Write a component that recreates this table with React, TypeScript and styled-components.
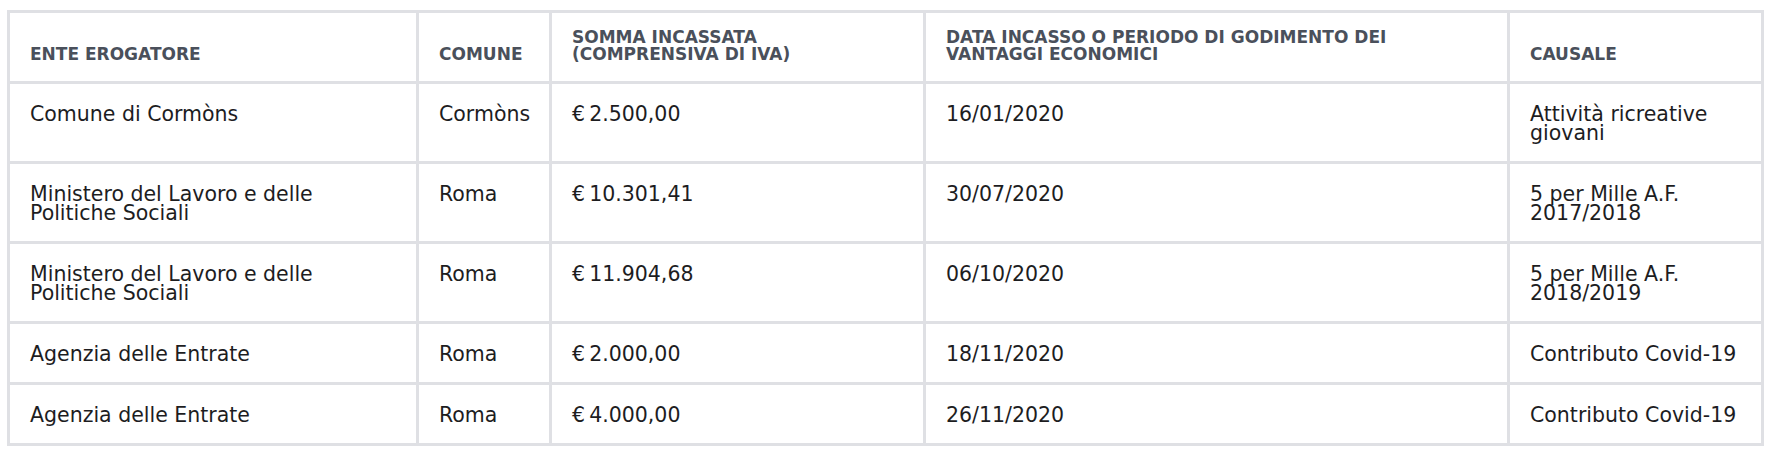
import React from 'react';
import styled, { createGlobalStyle } from 'styled-components';

const GlobalStyle = createGlobalStyle`
  html, body {
    margin: 0;
    padding: 0;
    background: #ffffff;
  }
  body {
    font-family: 'DejaVu Sans', Verdana, sans-serif;
  }
`;

const BORDER = '3px solid #dfe0e4';

const Page = styled.div`
  padding: 10px 10px 0 7px;
`;

const Table = styled.table`
  width: 1757px;
  border-collapse: collapse;
  table-layout: fixed;
  border: ${BORDER};
`;

const HeadCell = styled.th`
  border: ${BORDER};
  padding: 16px 20px 18px;
  text-align: left;
  vertical-align: bottom;
  font-size: 17px;
  line-height: 1;
  font-weight: 700;
  text-transform: uppercase;
  color: #4a505b;
`;

const Cell = styled.td`
  border: ${BORDER};
  padding: 21px 20px 18px;
  vertical-align: top;
  font-size: 20.5px;
  line-height: 19px;
  color: #1d1d1f;
`;

type Row = {
  ente: string;
  comune: string;
  somma: string;
  data: string;
  causale: string;
};

const rows: Row[] = [
  { ente: 'Comune di Cormòns', comune: 'Cormòns', somma: '€\u20092.500,00', data: '16/01/2020', causale: 'Attività ricreative giovani' },
  { ente: 'Ministero del Lavoro e delle Politiche Sociali', comune: 'Roma', somma: '€\u200910.301,41', data: '30/07/2020', causale: '5 per Mille A.F. 2017/2018' },
  { ente: 'Ministero del Lavoro e delle Politiche Sociali', comune: 'Roma', somma: '€\u200911.904,68', data: '06/10/2020', causale: '5 per Mille A.F. 2018/2019' },
  { ente: 'Agenzia delle Entrate', comune: 'Roma', somma: '€\u20092.000,00', data: '18/11/2020', causale: 'Contributo Covid-19' },
  { ente: 'Agenzia delle Entrate', comune: 'Roma', somma: '€\u20094.000,00', data: '26/11/2020', causale: 'Contributo Covid-19' },
];

const columns = [
  { title: 'Ente erogatore', width: 409 },
  { title: 'Comune', width: 133 },
  { title: 'Somma incassata (comprensiva di IVA)', width: 374 },
  { title: 'Data incasso o periodo di godimento dei vantaggi economici', width: 584 },
  { title: 'Causale', width: 254 },
];

export default function App(): React.ReactElement {
  return (
    <Page>
      <GlobalStyle />
      <Table>
        <colgroup>
          {columns.map((c) => (
            <col key={c.title} style={{ width: c.width }} />
          ))}
        </colgroup>
        <thead>
          <tr>
            {columns.map((c) => (
              <HeadCell key={c.title}>{c.title}</HeadCell>
            ))}
          </tr>
        </thead>
        <tbody>
          {rows.map((r, i) => (
            <tr key={i}>
              <Cell>{r.ente}</Cell>
              <Cell>{r.comune}</Cell>
              <Cell>{r.somma}</Cell>
              <Cell>{r.data}</Cell>
              <Cell>{r.causale}</Cell>
            </tr>
          ))}
        </tbody>
      </Table>
    </Page>
  );
}
